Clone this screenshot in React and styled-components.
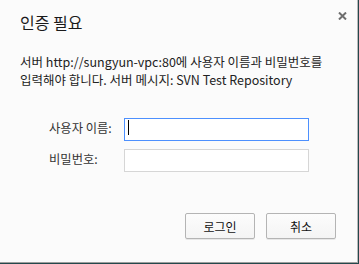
import styled, { createGlobalStyle } from 'styled-components'

const GlobalStyle = createGlobalStyle`
   html, body {
      margin: 0;
      padding: 0;
      background: #24484c;
   }
   body {
      font-family: 'Noto Sans CJK KR', 'Noto Sans', sans-serif;
      width: 359px;
      height: 264px;
      overflow: hidden;
   }
`

const Dialog = styled.div`
   width: 357px;
   height: 262px;
   background: #fbfbfb;
   border-right: 1px solid #b9b9b9;
   border-bottom: 1px solid #9e9e9e;
   display: flex;
   flex-direction: column;
   color: #222;
`

const Header = styled.div`
   display: flex;
   justify-content: space-between;
   align-items: flex-start;
   padding: 12px 9px 0 20px;
`

const Title = styled.h1`
   margin: 0;
   font-size: 16px;
   line-height: 20px;
   font-weight: 400;
   color: #1a1a1a;
`

const Close = styled.button`
   border: 0;
   padding: 0;
   margin-top: -2px;
   background: none;
   width: 12px;
   height: 12px;
   display: flex;
   align-items: center;
   justify-content: center;
`

const Message = styled.p`
   margin: 21px 20px 0;
   font-size: 12.5px;
   line-height: 18px;
   color: #222;
   white-space: nowrap;
`

const Form = styled.div`
   margin-top: 27px;
   padding-left: 49px;
   display: grid;
   grid-template-columns: 75px 185px;
   row-gap: 8px;
   align-items: center;
`

const Label = styled.label`
   font-size: 12.3px;
   color: #333;
`

const Field = styled.div`
   position: relative;
   height: 23px;
`

const Input = styled.input`
   box-sizing: border-box;
   width: 185px;
   height: 23px;
   margin: 0;
   padding: 0 4px;
   background: #fff;
   border: 1px solid ${(p) => (p.$focused ? '#4d90fe' : '#d6d6d6')};
   outline: none;
   font-size: 12px;
   font-family: inherit;
`

const Caret = styled.span`
   position: absolute;
   left: 4px;
   top: 4px;
   width: 1px;
   height: 15px;
   background: #000;
`

const Buttons = styled.div`
   margin-top: 43px;
   padding-right: 21px;
   display: flex;
   justify-content: flex-end;
   gap: 11px;
`

const Button = styled.button`
   box-sizing: border-box;
   width: 70px;
   height: 26px;
   border: 1px solid #b4b4b4;
   border-radius: 2px;
   background: linear-gradient(#fcfcfc, #f4f4f4);
   box-shadow: 0 1px 0 rgba(0, 0, 0, 0.08);
   font-family: inherit;
   font-size: 12px;
   color: #111;
   padding: 0;
`

function App() {
   return (
      <>
         <GlobalStyle />
         <Dialog>
            <Header>
               <Title>인증 필요</Title>
               <Close aria-label="닫기">
                  <svg width="9" height="8" viewBox="0 0 9 8">
                     <path
                        d="M1 0.5 L8 7.5 M8 0.5 L1 7.5"
                        stroke="#6e6e6e"
                        strokeWidth="2"
                     />
                  </svg>
               </Close>
            </Header>
            <Message>
               서버 http://sungyun-vpc:80에 사용자 이름과 비밀번호를
               <br />
               입력해야 합니다. 서버 메시지: SVN Test Repository
            </Message>
            <Form>
               <Label>사용자 이름:</Label>
               <Field>
                  <Input $focused readOnly />
                  <Caret />
               </Field>
               <Label>비밀번호:</Label>
               <Field>
                  <Input type="password" readOnly />
               </Field>
            </Form>
            <Buttons>
               <Button>로그인</Button>
               <Button>취소</Button>
            </Buttons>
         </Dialog>
      </>
   )
}

export default App
